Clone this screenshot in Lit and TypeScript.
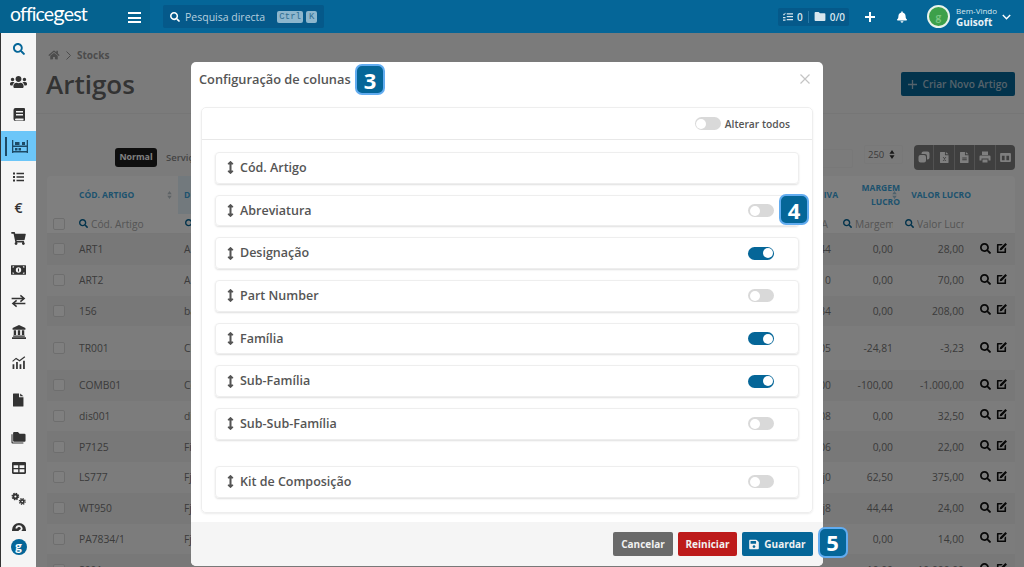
import { LitElement, html, css } from "lit";
import { customElement } from "lit/decorators.js";

const P = {
  search: ["0 0 512 512", "M505 442.7L405.3 343c-4.5-4.5-10.6-7-17-7H372c27.6-35.3 44-79.7 44-128C416 93.1 322.9 0 208 0S0 93.1 0 208s93.1 208 208 208c48.3 0 92.7-16.4 128-44v16.3c0 6.4 2.5 12.5 7 17l99.7 99.7c9.4 9.4 24.6 9.4 33.9 0l28.3-28.3c9.4-9.4 9.4-24.6.1-34zM208 336c-70.7 0-128-57.2-128-128 0-70.7 57.2-128 128-128 70.7 0 128 57.2 128 128 0 70.7-57.2 128-128 128z"],
  home: ["0 0 576 512", "M280.37 148.26L96 300.11V464a16 16 0 0 0 16 16l112.06-.29a16 16 0 0 0 15.92-16V368a16 16 0 0 1 16-16h64a16 16 0 0 1 16 16v95.64a16 16 0 0 0 16 16.05L464 480a16 16 0 0 0 16-16V300L295.67 148.26a12.19 12.19 0 0 0-15.3 0zM571.6 251.47L488 182.56V44.05a12 12 0 0 0-12-12h-56a12 12 0 0 0-12 12v72.61L318.47 43a48 48 0 0 0-61 0L4.34 251.47a12 12 0 0 0-1.6 16.9l25.5 31A12 12 0 0 0 45.15 301l235.22-193.74a12.19 12.19 0 0 1 15.3 0L530.9 301a12 12 0 0 0 16.9-1.6l25.5-31a12 12 0 0 0-1.7-16.93z"],
  users: ["0 0 640 512", "M96 224c35.3 0 64-28.7 64-64s-28.7-64-64-64-64 28.7-64 64 28.7 64 64 64zm448 0c35.3 0 64-28.7 64-64s-28.7-64-64-64-64 28.7-64 64 28.7 64 64 64zm32 32h-64c-17.6 0-33.5 7.1-45.1 18.6 40.3 22.1 68.9 62 75.1 109.4h66c17.7 0 32-14.3 32-32v-32c0-35.3-28.7-64-64-64zm-256 0c61.9 0 112-50.1 112-112S381.9 32 320 32 208 82.1 208 144s50.1 112 112 112zm76.8 32h-8.3c-20.8 10-43.9 16-68.5 16s-47.6-6-68.5-16h-8.3C179.6 288 128 339.6 128 403.2V432c0 26.5 21.5 48 48 48h288c26.5 0 48-21.5 48-48v-28.8c0-63.6-51.6-115.2-115.2-115.2zm-223.7-13.4C161.5 263.1 145.6 256 128 256H64c-35.3 0-64 28.7-64 64v32c0 17.7 14.3 32 32 32h65.9c6.3-47.4 34.9-87.3 75.2-109.4z"],
  cart: ["0 0 576 512", "M528.12 301.319l47.273-208C578.806 78.301 567.391 64 551.99 64H159.208l-9.166-44.81C147.758 8.021 137.93 0 126.529 0H24C10.745 0 0 10.745 0 24v16c0 13.255 10.745 24 24 24h69.883l70.248 343.435C147.325 417.1 136 435.222 136 456c0 30.928 25.072 56 56 56s56-25.072 56-56c0-15.674-6.447-29.835-16.824-40h209.647C430.447 426.165 424 440.326 424 456c0 30.928 25.072 56 56 56s56-25.072 56-56c0-22.172-12.888-41.332-31.579-50.405l5.517-24.276c3.413-15.018-8.002-29.319-23.403-29.319H218.117l-6.545-32h293.145c11.206 0 20.92-7.754 23.403-18.681z"],
  bell: ["0 0 448 512", "M224 512c35.32 0 63.97-28.65 63.97-64H160.03c0 35.35 28.65 64 63.97 64zm215.39-149.71c-19.32-20.76-55.47-51.99-55.47-154.29 0-77.7-54.48-139.9-127.94-155.16V32c0-17.67-14.32-32-31.98-32s-31.98 14.33-31.98 32v20.84C118.56 68.1 64.08 130.3 64.08 208c0 102.3-36.15 133.53-55.47 154.29-6 6.45-8.66 14.16-8.61 21.71.11 16.4 12.98 32 32.1 32h383.8c19.12 0 32-15.6 32.1-32 .05-7.55-2.61-15.27-8.61-21.71z"],
  save: ["0 0 448 512", "M433.941 129.941l-83.882-83.882A48 48 0 0 0 316.118 32H48C21.49 32 0 53.49 0 80v352c0 26.51 21.49 48 48 48h352c26.51 0 48-21.49 48-48V163.882a48 48 0 0 0-14.059-33.941zM224 416c-35.346 0-64-28.654-64-64 0-35.346 28.654-64 64-64s64 28.654 64 64c0 35.346-28.654 64-64 64zm96-304.52V212c0 6.627-5.373 12-12 12H76c-6.627 0-12-5.373-12-12V108c0-6.627 5.373-12 12-12h228.52c3.183 0 6.235 1.264 8.485 3.515l3.48 3.48A11.996 11.996 0 0 1 320 111.48z"],
  vert: ["0 0 256 512", "M214.059 377.941H168V134.059h46.059c21.382 0 32.09-25.851 16.971-40.971L144.971 7.029c-9.373-9.373-24.569-9.373-33.941 0L24.971 93.088c-15.119 15.119-4.411 40.971 16.971 40.971H88v243.882H41.941c-21.382 0-32.09 25.851-16.971 40.971l86.059 86.059c9.373 9.373 24.569 9.373 33.941 0l86.059-86.059c15.12-15.119 4.412-40.971-16.97-40.971z"],
  book: ["0 0 24 26", "M5 0h17a2 2 0 0 1 2 2v22a2 2 0 0 1-2 2H5a4 4 0 0 1-4-4V4a4 4 0 0 1 4-4zm1 6v3h14V6zm0 6v3h14v-3zm0 13h15v-4H6a2 2 0 0 0 0 4z"],
  list: ["0 0 24 24", "M1 3h4v4H1zm7 .5h15v3H8zM1 10h4v4H1zm7 .5h15v3H8zM1 17h4v4H1zm7 .5h15v3H8z"],
  bill: ["0 0 28 20", "M1 1h26a1 1 0 0 1 1 1v16a1 1 0 0 1-1 1H1a1 1 0 0 1-1-1V2a1 1 0 0 1 1-1zm13 4a5 5 0 1 0 0 10 5 5 0 0 0 0-10zM3 3v3a3 3 0 0 0 3-3zm19 0a3 3 0 0 0 3 3V3zM3 14v3h3a3 3 0 0 0-3-3zm22 0a3 3 0 0 0-3 3h3zM13 7h2v6h-2z"],
  bank: ["0 0 24 24", "M12 0l11 5v3H1V5zM3 9h4v8H3zm7 0h4v8h-4zm7 0h4v8h-4zM2 18h20v2H2zM0 21h24v3H0z"],
  file: ["0 0 20 24", "M1 0h10v7h8v16a1 1 0 0 1-1 1H1a1 1 0 0 1-1-1V1a1 1 0 0 1 1-1zm12 0l6 5h-6z"],
  xls: ["0 0 20 24", "M1 0h10v7h8v16a1 1 0 0 1-1 1H1a1 1 0 0 1-1-1V1a1 1 0 0 1 1-1zm12 0l6 5h-6zM6 11l4 5 4-5h-2l-2 2.500L8 11zm0 9h2l2-2.500 2 2.500h2l-3-3.500h-2z"],
  pdf: ["0 0 20 24", "M1 0h10v7h8v16a1 1 0 0 1-1 1H1a1 1 0 0 1-1-1V1a1 1 0 0 1 1-1zm12 0l6 5h-6zM5 12v2h10v-2zm0 4v2h10v-2z"],
  files: ["0 0 26 24", "M5 2h7l3 3h9a2 2 0 0 1 2 2v11a2 2 0 0 1-2 2H5a2 2 0 0 1-2-2V4a2 2 0 0 1 2-2zM0 6h2v14a1 1 0 0 0 1 1h19v2H2a2 2 0 0 1-2-2z"],
  table: ["0 0 26 22", "M2 0h22a2 2 0 0 1 2 2v18a2 2 0 0 1-2 2H2a2 2 0 0 1-2-2V2a2 2 0 0 1 2-2zm1 6v5h8.500V6zm11 0v5h9V6zM3 13.500V19h8.500v-5.500zm11 0V19h9v-5.500z"],
  edit: ["0 0 24 24", "M3 2h12l-3.500 3.500H5.500v13h13v-6l3.500-3.500V20a2 2 0 0 1-2 2H4a2 2 0 0 1-2-2V4a2 2 0 0 1 1-2zm17.500-2L24 3.500 12.500 15 8 16l1-4.500z"],
  copy: ["0 0 24 24", "M11 1h8a4 4 0 0 1 4 4v8a4 4 0 0 1-4 4h-1V10a4 4 0 0 0-4-4H7V5a4 4 0 0 1 4-4zM5 8h7a4 4 0 0 1 4 4v7a4 4 0 0 1-4 4H5a4 4 0 0 1-4-4v-7a4 4 0 0 1 4-4z"],
  print: ["0 0 24 24", "M6 1h12v7H6zM3 9h18a2 2 0 0 1 2 2v8h-4v-4H5v4H1v-8a2 2 0 0 1 2-2zm4 8h10v6H7z"],
  cols: ["0 0 24 20", "M2 0h20a2 2 0 0 1 2 2v16a2 2 0 0 1-2 2H2a2 2 0 0 1-2-2V2a2 2 0 0 1 2-2zm2 6v10h6V6zm10 0v10h6V6z"],
  sortv: ["0 0 10 16", "M5 0l4.500 6.500h-9zM5 16l-4.500-6.500h9z"],
  folder: ["0 0 26 20", "M3 0h7l3 3h10a2 2 0 0 1 2 2v13a2 2 0 0 1-2 2H3a2 2 0 0 1-2-2V2a2 2 0 0 1 2-2z"],
  checks: ["0 0 24 20", "M0 3l2 2 3-4 1.500 1L2.300 8 0 5zM9 2h15v3H9zM0 11h6v3H0zM9 9h15v3H9zM0 17h6v3H0zM9 16h15v3H9z"],
  stock: ["0 0 32 26", "M0 0h2.600v26H0zM29.400 0H32v26h-2.600zM2 11h28v3H2zM2 22h28v3H2zM6 4h9v6H6zM6 16h5v5H6zm7 0h5v5h-5zm7-12h6v6h-6z"],
};

const icon = (k: keyof typeof P, w: number, h: number) => html`<svg width=${w} height=${h} viewBox=${P[k][0]} fill="currentColor" aria-hidden="true"><path d=${P[k][1]}></path></svg>`;

const exchange = html`<svg width="15" height="14" viewBox="0 0 24 22" fill="none" stroke="currentColor" stroke-width="2.400" aria-hidden="true"><path d="M1 7h19M15 2l6 5-6 5M23 15H4M9 10l-6 5 6 5"></path></svg>`;
const chart = html`<svg width="14" height="13" viewBox="0 0 24 22" aria-hidden="true" fill="currentColor"><path d="M1 14h3v8H1zm6-4h3v12H7zm6 4h3v8h-3zm6-6h3v14h-3z"></path><path d="M1 9l6-5 6 4 9-7" fill="none" stroke="currentColor" stroke-width="2"></path></svg>`;
const cogs = html`<svg width="15" height="14" viewBox="0 0 24 21" fill="none" stroke="currentColor" aria-hidden="true"><circle cx="7" cy="6.500" r="3.200" stroke-width="3"></circle><circle cx="7" cy="6.500" r="5.200" stroke-width="2" stroke-dasharray="2.200 1.900"></circle><circle cx="18" cy="14.500" r="2.600" stroke-width="2.600"></circle><circle cx="18" cy="14.500" r="4.600" stroke-width="2" stroke-dasharray="2 1.600"></circle></svg>`;
const help = html`<svg width="14" height="14" viewBox="0 0 24 24" aria-hidden="true"><circle cx="12" cy="12" r="12" fill="currentColor"></circle><path d="M7.500 9.500a4.500 4 0 1 1 6.500 3.500c-1.200.7-2 1.300-2 3" fill="none" stroke="#f5f5f5" stroke-width="3"></path></svg>`;
const euro = html`<span class="euro">€</span>`;

const NAV = [
  { i: icon("search", 12, 12), c: "first" },
  { i: icon("users", 17, 14), c: "big" },
  { i: icon("book", 12, 13), c: "big" },
  { i: icon("stock", 16, 13), c: "active" },
  { i: icon("list", 13, 12) },
  { i: euro },
  { i: icon("cart", 15, 13) },
  { i: icon("bill", 15, 12) },
  { i: exchange },
  { i: icon("bank", 14, 14) },
  { i: chart },
  { i: icon("file", 11, 14), c: "filei" },
  { i: icon("files", 15, 13), c: "foldi" },
  { i: icon("table", 14, 12) },
  { i: cogs },
  { i: help },
];

const ROWS = [
  ["ART1", "A", "44", "0,00", "28,00"],
  ["ART2", "A", "0", "0,00", "70,00"],
  ["156", "ba", "34", "0,00", "208,00"],
  ["TR001", "Ci", "05", "-24,81", "-3,23", "tall"],
  ["COMB01", "Co", "00", "-100,00", "-1.000,00"],
  ["dis001", "di", "08", "0,00", "32,50"],
  ["P7125", "Fi", "06", "0,00", "22,00"],
  ["LS777", "Fj", "j0", "62,50", "375,00"],
  ["WT950", "Fj", "j8", "44,44", "24,00"],
  ["PA7834/1", "Fj", "", "0,00", "14,00"],
  ["S001", "", "", "-10,00", "-10.000,00"],
];

const ITEMS = [
  ["Cód. Artigo", null],
  ["Abreviatura", false],
  ["Designação", true],
  ["Part Number", false],
  ["Família", true],
  ["Sub-Família", true],
  ["Sub-Sub-Família", false],
] as const;

@customElement("app-root")
export class AppRoot extends LitElement {
  static styles = css`
    :host { display: block; width: 1024px; height: 567px; overflow: hidden; position: relative; font-family: "Open Sans", "Liberation Sans", sans-serif; color: #555; background: #f7f7f7; }
    * { box-sizing: border-box; }
    svg { display: block; flex: none; }

    .top { height: 33px; background: #056698; display: flex; align-items: center; color: #fff; }
    .brand { width: 150px; height: 33px; flex: none; background: #05628f; display: flex; align-items: flex-start; padding: 1px 0 0 10px; }
    .logo { font-family: "Lato", sans-serif; font-size: 19.500px; font-weight: 400; letter-spacing: -0.9px; color: #fff; line-height: 26px; }
    .logo b { font-weight: 400; font-size: 22px; line-height: 0; }
    .menu { width: 13px; height: 11px; flex: none; display: flex; flex-direction: column; justify-content: space-between; position: absolute; left: 128px; top: 12px; }
    .menu i { display: block; height: 2px; background: #fff; }
    .qs { margin-left: 13px; width: 161px; height: 23px; background: #05598a; border-radius: 2px; display: flex; align-items: center; padding-left: 7px; font-size: 10.500px; color: #b7d0df; flex: none; }
    .qs svg { color: #fff; margin-right: 5px; }
    .kbd { font-family: "Liberation Mono", monospace; font-size: 9px; background: #8db6cd; color: #2f6f93; border-radius: 2px; height: 12px; line-height: 12px; padding: 0 2px; text-align: center; }
    .kbd.c { margin-left: 12px; width: 26px; }
    .kbd.k { margin-left: 3px; width: 11px; }
    .tright { margin-left: auto; display: flex; align-items: center; }
    .counts { width: 71px; height: 18px; background: #05598a; border-radius: 2px; display: flex; align-items: center; padding-left: 5px; font-size: 10px; font-weight: 600; color: #d8e6ee; }
    .counts span { margin-left: 4px; }
    .counts b { width: 1px; height: 12px; background: #2a7aa8; margin: 0 5px; }
    .plus { margin-left: 16px; width: 10px; height: 10px; position: relative; flex: none; }
    .plus::before, .plus::after { content: ""; position: absolute; background: #fff; }
    .plus::before { left: 4px; top: 0; width: 2px; height: 10px; }
    .plus::after { top: 4px; left: 0; height: 2px; width: 10px; }
    .bell { margin-left: 22px; }
    .avatar { margin-left: 20px; width: 23px; height: 23px; border-radius: 50%; background: #3da04a; border: 2px solid #e8f3ea; display: flex; align-items: center; justify-content: center; font-size: 11px; color: #79c683; font-weight: 700; font-family: "Lato", sans-serif; }
    .user { margin-left: 6px; display: flex; flex-direction: column; width: 46px; }
    .user small { font-size: 8px; line-height: 10px; color: #d8e6ee; }
    .user strong { font-size: 10px; line-height: 12px; font-weight: 700; color: #e8f1f6; }
    .chev { margin: 0 13px 0 0; }

    .body { display: flex; height: 534px; }
    .side { width: 36px; flex: none; background: #f5f5f5; border-left: 1px solid #333; display: flex; flex-direction: column; height: 534px; position: relative; color: #333; }
    .nav { height: 498px; overflow: hidden; }
    .ni { height: 31px; display: flex; align-items: center; justify-content: center; position: relative; font-size: 0; }
    .ni.first { height: 32px; color: #056698; }
    .ni.big { height: 33px; }
    .ni.active { background: #6cc6f8; height: 30px; padding-left: 3px; }
    .ni.active::before { content: ""; position: absolute; left: 4px; top: 6px; bottom: 5px; width: 2px; background: #1d4a66; }
    .ni.active svg { color: #1d4a66; }
    .ni.filei { height: 44px; }
    .ni.foldi { height: 30px; }
    .euro { font-size: 14px; font-weight: 600; line-height: 16px; color: #333; }
    .glogo { position: absolute; left: 9.500px; top: 506px; width: 16px; height: 16px; border-radius: 50%; background: #056698; color: #fff; font-family: "Lato", sans-serif; font-weight: 700; font-size: 13px; line-height: 14px; text-align: center; }

    .main { flex: 1; position: relative; overflow: hidden; }
    .scrim { position: absolute; inset: 0; background: rgba(0,0,0,.5); }
    .phead { height: 81px; padding: 14px 9px 0 10px; border-bottom: 1px solid #ececec; }
    .crumb { display: flex; align-items: center; gap: 6px; height: 16px; font-size: 10px; font-weight: 700; color: #999; margin-left: 2px; }
    .titlerow { display: flex; justify-content: space-between; align-items: center; height: 36px; margin-top: 3px; }
    h1 { margin: 0; font-size: 26px; font-weight: 600; color: #666; line-height: 34px; }
    .create { background: #056698; color: #a9c5d6; width: 114px; height: 24px; border-radius: 2px; display: flex; align-items: center; justify-content: center; gap: 5px; font-size: 10.200px; font-weight: 600; }
    .tools { height: 62px; display: flex; align-items: center; padding: 24px 9px 0 79px; }
    .pill { background: #1c1c1c; color: #fff; font-size: 8.800px; font-weight: 700; height: 19px; line-height: 19px; border-radius: 3px; width: 42px; text-align: center; margin-right: 9px; }
    .serv { font-size: 9.500px; font-weight: 600; color: #888; }
    .inp { margin-left: auto; width: 40px; height: 19px; background: #f7f7f7; border: 1px solid #f0f0f0; border-radius: 2px; margin-top: 2px; }
    .sel { margin: -5px 0 0 11px; width: 39px; height: 19px; background: #f7f7f7; border: 1px solid #f0f0f0; border-radius: 2px; font-size: 9.500px; color: #777; display: flex; align-items: center; padding-left: 3px; gap: 5px; }
    .sel svg { color: #333; }
    .btns { margin-left: 11px; width: 101px; height: 25px; display: flex; border-radius: 4px; overflow: hidden; }
    .btns div { background: #7e7e7e; flex: 1; display: flex; align-items: center; justify-content: center; color: #fff; border-right: 1px solid #a4a4a4; }
    .btns div:last-child { border: 0; }

    .card { margin: 0 9px 0 11px; background: #fff; border-radius: 4px 4px 0 0; }
    .gr { display: grid; grid-template-columns: 25px 106px 607px 53px 62px 71px 1fr; align-items: center; }
    .th { height: 38px; font-size: 8.500px; font-weight: 700; color: #3ba5dc; line-height: 14px; position: relative; }
    .th .so { display: flex; justify-content: space-between; padding: 0 6px 0 7px; align-items: center; }
    .th .so svg { color: #bcc7cc; }
    .th .sorted { background: #e5f3fb; height: 38px; padding-left: 6px; line-height: 38px; }
    .th .e { text-align: right; }
    .th .mk { position: absolute; left: 845px; top: 15px; color: #9fc5da; }
    .fl { height: 20px; border-bottom: 1px solid #eee; font-size: 10.200px; color: #aaa; }
    .fl .f { display: flex; align-items: center; gap: 3px; padding: 0 7px 0 7px; color: #aaa; min-width: 0; }
    .fl .f.n { padding-left: 5px; }
    .fl .f span { flex: 1; min-width: 0; overflow: hidden; white-space: nowrap; }
    .fl .f svg { color: #056698; }
    .ia { text-align: right; padding-right: 10px; }
    .cb { display: block; width: 12px; height: 12px; margin-left: 6px; border: 1px solid #ddd; border-radius: 2px; background: #fff; }
    .row { height: 30.750px; font-size: 10.300px; color: #777; background: #f9f9f9; }
    .row.alt { background: #f0f0f0; }
    .row.tall { height: 43.500px; }
    .row > div { white-space: nowrap; overflow: hidden; }
    .code { padding-left: 7px; }
    .desc { padding-left: 6px; }
    .num { text-align: right; padding-right: 7px; }
    .row > .acts { display: flex; gap: 5px; padding: 0 0 2px 9px; color: #111; overflow: visible; }

    .modal { position: absolute; left: 191px; top: 62px; width: 632px; height: 504px; background: #fff; border-radius: 5px; display: flex; flex-direction: column; overflow: hidden; }
    .mh { height: 35px; display: flex; align-items: center; padding: 0 0 1px 8px; font-size: 12.800px; font-weight: 600; color: #555; flex: none; }
    .close { position: absolute; right: 13px; top: 12px; width: 10px; height: 10px; }
    .panel { margin: 10px 10px 0 10px; height: 406px; border: 1px solid #eee; border-radius: 5px; box-shadow: 0 1px 2px rgba(0,0,0,.08); flex: none; }
    .pt { height: 32px; border-bottom: 1px solid #e8e8e8; display: flex; align-items: center; justify-content: flex-end; padding-right: 22px; gap: 4px; font-size: 10.300px; font-weight: 600; color: #555; }
    .list { padding: 12px 13px 0 13px; display: flex; flex-direction: column; gap: 11px; }
    .item { height: 31.700px; border: 1px solid #eee; border-radius: 4px; box-shadow: 0 1px 2px rgba(0,0,0,.13); display: flex; align-items: center; padding: 0 24px 0 11px; gap: 6px; font-size: 12.500px; font-weight: 600; color: #555; }
    .item.kit { margin-top: 15px; }
    .item span { flex: 1; margin-top: -1px; }
    .tg { width: 26px; height: 13px; border-radius: 7px; background: #d9d9d9; position: relative; flex: none; }
    .tg::after { content: ""; position: absolute; left: 1.500px; top: 1.500px; width: 10px; height: 10px; border-radius: 50%; background: #fff; }
    .tg.on { background: #056698; }
    .tg.on::after { left: 14.500px; }
    .mf { margin-top: 9px; flex: 1; background: #f5f5f5; display: flex; align-items: center; justify-content: flex-end; padding-right: 10px; gap: 5px; }
    .b { height: 24px; border-radius: 2px; color: #f1f1f1; font-size: 10px; font-weight: 700; display: flex; align-items: center; justify-content: center; gap: 5px; }
    .b.g { width: 60px; background: #6a6a6a; }
    .b.r { width: 59px; background: #bd1a1a; }
    .b.s { width: 71px; background: #056698; }

    .badge { position: absolute; width: 30px; height: 31px; border-radius: 7px; background: #056698; border: 2px solid #62acf0; color: #fff; font-size: 22px; font-weight: 700; display: flex; align-items: center; justify-content: center; }
    .b3 { left: 355px; top: 64px; }
    .b4 { left: 779px; top: 194px; }
    .b5 { left: 817.500px; top: 526.500px; }
  `;

  render() {
    return html`
      <header class="top">
        <div class="brand"><span class="logo">office<b>g</b>est</span></div>
        <div class="menu" aria-label="Menu"><i></i><i></i><i></i></div>
        <div class="qs">
          ${icon("search", 10, 10)}<span>Pesquisa directa</span>
          <span class="kbd c">Ctrl</span><span class="kbd k">K</span>
        </div>
        <div class="tright">
          <div class="counts">
            ${icon("checks", 10, 9)}<span>0</span><b></b>${icon("folder", 12, 9)}<span>0/0</span>
          </div>
          <div class="plus"></div>
          <div class="bell">${icon("bell", 10, 12)}</div>
          <div class="avatar">g</div>
          <div class="user"><small>Bem-Vindo</small><strong>Guisoft</strong></div>
          <svg class="chev" width="9" height="6" viewBox="0 0 9 6" fill="none" stroke="#fff" stroke-width="1.400" aria-hidden="true"><path d="M.8 1l3.700 3.700L8.200 1"></path></svg>
        </div>
      </header>
      <div class="body">
        <aside class="side">
          <nav class="nav">${NAV.map((n) => html`<div class="ni ${n.c ?? ""}">${n.i}</div>`)}</nav>
          <div class="glogo">g</div>
        </aside>
        <main class="main">
          <div class="phead">
            <div class="crumb">${icon("home", 12, 10)}
              <svg width="5" height="9" viewBox="0 0 5 9" fill="none" stroke="currentColor" aria-hidden="true"><path d="M.5.5l4 4-4 4"></path></svg>
              <span>Stocks</span></div>
            <div class="titlerow"><h1>Artigos</h1>
              <div class="create"><svg width="9" height="9" viewBox="0 0 9 9" fill="none" stroke="currentColor" stroke-width="1.300" aria-hidden="true"><path d="M4.500 0v9M0 4.500h9"></path></svg>Criar Novo Artigo</div>
            </div>
          </div>
          <div class="tools">
            <span class="pill">Normal</span><span class="serv">Serviços</span>
            <div class="inp"></div>
            <div class="sel"><span>250</span>${icon("sortv", 6, 9)}</div>
            <div class="btns">
              <div>${icon("copy", 12, 12)}</div><div>${icon("xls", 9, 11)}</div><div>${icon("pdf", 9, 11)}</div><div>${icon("print", 12, 12)}</div><div>${icon("cols", 11, 9)}</div>
            </div>
          </div>
          <div class="card">
            <div class="gr th">
              <div></div>
              <div class="so"><span>CÓD. ARTIGO</span>${icon("sortv", 5, 8)}</div>
              <div class="sorted">D</div>
              <div class="e">IVA</div>
              <div class="e">MARGEM<br />LUCRO</div>
              <div class="e">VALOR LUCRO</div>
              <div></div>
              <span class="mk">${icon("sortv", 5, 8)}</span>
            </div>
            <div class="gr fl">
              <div><span class="cb"></span></div>
              <div class="f">${icon("search", 9, 9)}<span>Cód. Artigo</span></div>
              <div class="f">${icon("search", 9, 9)}</div>
              <div class="ia">A</div>
              <div class="f n">${icon("search", 9, 9)}<span>Margem</span></div>
              <div class="f n">${icon("search", 9, 9)}<span>Valor Lucro</span></div>
              <div></div>
            </div>
            ${ROWS.map((r, i) => html`
              <div class="gr row ${i % 2 ? "" : "alt"} ${r[5] ?? ""}">
                <div><span class="cb"></span></div>
                <div class="code">${r[0]}</div>
                <div class="desc">${r[1]}</div>
                <div class="num">${r[2]}</div>
                <div class="num">${r[3]}</div>
                <div class="num">${r[4]}</div>
                <div class="acts">${icon("search", 11, 11)}${icon("edit", 11, 11)}</div>
              </div>`)}
          </div>
          <div class="scrim"></div>
        </main>
      </div>
      <section class="modal">
        <div class="mh">Configuração de colunas</div>
        <svg class="close" viewBox="0 0 10 10" fill="none" stroke="#c4c4c4" stroke-width="1.200" aria-label="Fechar"><path d="M.5.5l9 9M9.500.5l-9 9"></path></svg>
        <div class="panel">
          <div class="pt"><div class="tg"></div><span>Alterar todos</span></div>
          <div class="list">
            ${ITEMS.map(([t, v]) => html`<div class="item">${icon("vert", 7, 13)}<span>${t}</span>${v === null ? "" : html`<div class="tg ${v ? "on" : ""}"></div>`}</div>`)}
            <div class="item kit">${icon("vert", 7, 13)}<span>Kit de Composição</span><div class="tg"></div></div>
          </div>
        </div>
        <div class="mf">
          <div class="b g">Cancelar</div>
          <div class="b r">Reiniciar</div>
          <div class="b s">${icon("save", 10, 11)}Guardar</div>
        </div>
      </section>
      <div class="badge b3">3</div>
      <div class="badge b4">4</div>
      <div class="badge b5">5</div>
    `;
  }
}
